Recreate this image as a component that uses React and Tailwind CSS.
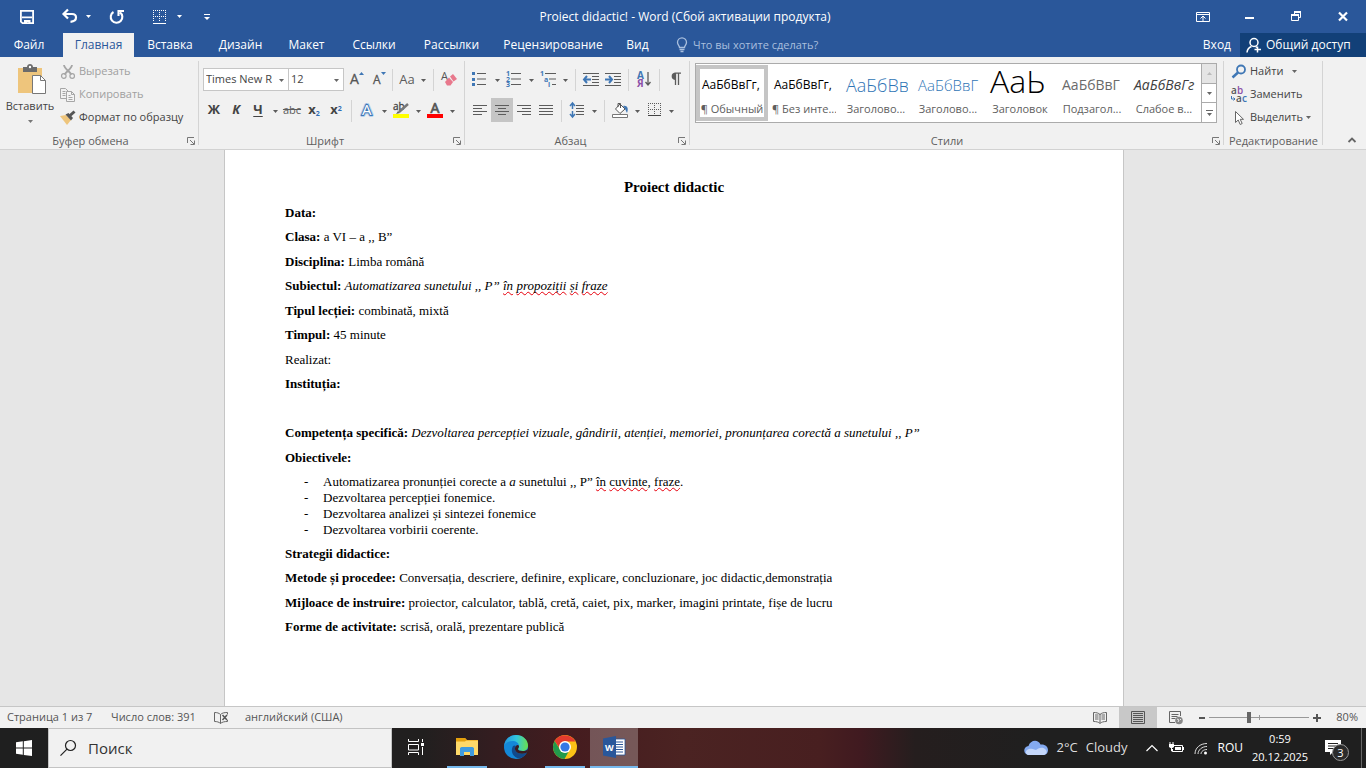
import clsx from "clsx";

const tabs = [
  { label: "Файл", cls: "w-[58px] mr-[5px]" },
  { label: "Главная", cls: "w-[71px] bg-[#f1f1f1] text-[#2a579a]" },
  { label: "Вставка", cls: "w-[72px]" },
  { label: "Дизайн", cls: "w-[69px]" },
  { label: "Макет", cls: "w-[63px]" },
  { label: "Ссылки", cls: "w-[72px]" },
  { label: "Рассылки", cls: "w-[83px]" },
  { label: "Рецензирование", cls: "w-[120px]" },
  { label: "Вид", cls: "w-[49px]" },
];

const styles = [
  { sample: "АаБбВвГг,", name: "¶ Обычный", cls: "text-[12px] text-black", active: true },
  { sample: "АаБбВвГг,", name: "¶ Без инте...", cls: "text-[12px] text-black" },
  { sample: "АаБбВв", name: "Заголово...", cls: "text-[18px] font-light text-[#2e74b5]" },
  { sample: "АаБбВвГ", name: "Заголово...", cls: "text-[15px] font-light text-[#2e74b5]" },
  { sample: "АаЬ", name: "Заголовок", cls: "text-[32px] font-light text-black pb-2" },
  { sample: "АаБбВвГ", name: "Подзагол...", cls: "text-[14px] text-[#6a6a6a]" },
  { sample: "АаБбВвГг", name: "Слабое в...", cls: "text-[14px] italic text-[#404040]" },
];

function Icon({ size = 16, className, children, label }) {
  return (
    <svg width={size} height={size} viewBox={`0 0 ${size} ${size}`} fill="none" className={clsx("shrink-0 overflow-visible", className)} role={label ? "img" : undefined} aria-label={label} aria-hidden={label ? undefined : true}>
      {children}
    </svg>
  );
}

function Caret({ className, label = "Ещё" }) {
  return (
    <button type="button" aria-label={label} className={clsx("grid h-[22px] w-3 shrink-0 place-items-center", className)}>
      <svg width="5" height="3" viewBox="0 0 5 3" aria-hidden="true"><path d="M0 0h5L2.5 3z" fill="currentColor" /></svg>
    </button>
  );
}

function Tool({ label, active, className, children }) {
  return (
    <button type="button" aria-label={label} title={label} className={clsx("grid h-6 shrink-0 place-items-center", className || "w-[22px]", active && "bg-[#c5c5c5]")}>
      {children}
    </button>
  );
}

function Sep() {
  return <span className="mx-1 h-[22px] w-px shrink-0 bg-[#d4d4d4]" />;
}

function Launcher() {
  return (
    <button type="button" aria-label="Параметры" className="absolute right-1 bottom-1">
      <Icon size={8}>
        <path d="M.5 6V.5H7M3 3l4 4M7.500 3.500v4h-4" stroke="#777" />
      </Icon>
    </button>
  );
}

function Group({ title, className, launcher, children }) {
  return (
    <section aria-label={title} className={clsx("relative flex shrink-0 flex-col", className)}>
      <div className="h-[76px]">{children}</div>
      <h2 className={clsx("text-center text-[11px] leading-4 whitespace-nowrap text-[#5e5e5e]", launcher && "pr-[18px]")}>{title}</h2>
      {launcher && <Launcher />}
      <span className="absolute top-1 right-0 h-[84px] w-px bg-[#d4d4d4]" />
    </section>
  );
}

/* horizontal strokes: each row is [x1, x2] */
function Lines({ rows, y = 3, step = 3, color = "#5c5c5c" }) {
  return <path d={rows.map(([a, b], i) => `M${a} ${y + i * step + 0.5}H${b}`).join("")} stroke={color} />;
}

function TitleBar() {
  return (
    <header className="relative flex h-[33px] shrink-0 items-center bg-[#2a579a] text-white">
      <div className="flex flex-1 items-center pl-[19px]">
        <button type="button" aria-label="Сохранить" className="mr-[26px]">
          <Icon>
            <path d="M1.900 1.900h12.200v12.200H3.500l-1.600-1.500z" stroke="#fff" strokeWidth="1.800" />
            <path d="M3 7.500h10v1.800H3zM5 11h6.500v4H9.500v-2H8v2H5z" fill="#fff" />
          </Icon>
        </button>
        <button type="button" aria-label="Отменить">
          <Icon size={18}>
            <path d="M7 1.500 2.500 6 7 10.500M3 6h8c3 0 4 1.800 4 3.500 0 2.600-2 4-5.500 4.300" stroke="#fff" strokeWidth="2.200" />
          </Icon>
        </button>
        <Caret className="mr-[14px] ml-[3px]" label="Список отмены" />
        <button type="button" aria-label="Повторить" className="mr-[27px]">
          <Icon size={18}>
            <path d="M5.500 4A5.800 5.800 0 1 0 12 4.300M10.500 8V3H16" stroke="#fff" strokeWidth="2.100" />
          </Icon>
        </button>
        <button type="button" aria-label="Границы">
          <Icon size={14}>
            <path d="M.5 0v12M6.500 0v12M12.500 0v12M0 .5h13M0 6.500h13" stroke="#fff" strokeDasharray="1 1" />
            <path d="M0 13.500h13" stroke="#fff" />
          </Icon>
        </button>
        <Caret className="ml-[6px]" label="Виды границ" />
        <button type="button" aria-label="Настройка панели" className="ml-[18px]">
          <Icon size={8}><path d="M1 1.500h6" stroke="#fff" /><path d="M1 4h6L4 7z" fill="#fff" /></Icon>
        </button>
      </div>
      <h1 className="text-[12px] whitespace-nowrap">Proiect didactic! - Word (Сбой активации продукта)</h1>
      <div className="flex flex-1 items-center justify-end gap-[31px] pr-[15px]">
        <button type="button" aria-label="Параметры ленты">
          <Icon size={14}><path d="M.5 2.500h13v9H.5zM.5 4.500h13M7 11V6.500M4.500 8.500 7 6l2.500 2.500" stroke="#fff" /></Icon>
        </button>
        <button type="button" aria-label="Свернуть">
          <Icon><path d="M4 9h9" stroke="#fff" strokeWidth="2" /></Icon>
        </button>
        <button type="button" aria-label="Восстановить">
          <Icon><path d="M3.500 6.500h7v5h-7zM6.500 6V3.500h6v5h-2" stroke="#fff" /><path d="M3 6h8M6 3h7" stroke="#fff" strokeWidth="2" /></Icon>
        </button>
        <button type="button" aria-label="Закрыть">
          <Icon><path d="m4 3.500 8 8M12 3.500l-8 8" stroke="#fff" strokeWidth="2.200" /></Icon>
        </button>
      </div>
    </header>
  );
}

function TabBar() {
  return (
    <nav className="flex h-6 shrink-0 items-stretch bg-[#2a579a] text-[12px] whitespace-nowrap text-white">
      {tabs.map((tab) => (
        <button key={tab.label} type="button" className={clsx("flex shrink-0 items-center justify-center", tab.cls)}>{tab.label}</button>
      ))}
      <label className="ml-3 flex flex-1 items-center gap-[3px] text-[#a9bfde]">
        <Icon>
          <path d="M5.500 10.500C5.500 8.500 3.500 8 3.500 5.300a4.500 4.500 0 0 1 9 0c0 2.700-2 3.200-2 5.200z" stroke="currentColor" strokeWidth="1.300" />
          <path d="M5.500 12.500h5M6.500 14.500h3" stroke="currentColor" strokeWidth="1.300" />
        </Icon>
        <input aria-label="Помощник" placeholder="Что вы хотите сделать?" className="w-40 bg-transparent text-[11px] outline-none placeholder:text-[#a9bfde]" />
      </label>
      <button type="button" className="px-[9px]">Вход</button>
      <button type="button" className="flex w-[126px] items-center gap-1 bg-[#124078] pl-[6px]">
        <Icon>
          <circle cx="8" cy="5.500" r="4" stroke="#fff" strokeWidth="1.500" />
          <path d="M1 15.500c.3-3.200 2-5.200 4.500-6M9.500 9.500l1.500 1M11.500 9.500v6M8.500 12.500h6.500" stroke="#fff" strokeWidth="1.500" />
        </Icon>
        Общий доступ
      </button>
    </nav>
  );
}

function ClipboardGroup() {
  return (
    <Group title="Буфер обмена" launcher className="w-[199px]">
      <div className="flex h-full text-[11px] text-[#444]">
        <button type="button" className="flex w-[60px] shrink-0 flex-col items-center pt-[7px]">
          <Icon size={32}>
            <path d="M4 4h24v25H4z" fill="#eec57c" />
            <path d="M9 3h4c0-4 6-4 6 0h4v5H9z" fill="#6b6b6b" />
            <circle cx="16" cy="3" r="1.200" fill="#fff" />
            <path d="M18.500 11.500h8l5 5v13h-13z" fill="#fff" stroke="#777" />
            <path d="M26.500 11.500v5h5" stroke="#777" />
          </Icon>
          <span className="mt-[2px] leading-4">Вставить</span>
          <svg width="5" height="3" viewBox="0 0 5 3" className="mt-[6px]" aria-hidden="true"><path d="M0 0h5L2.500 3z" fill="#777" /></svg>
        </button>
        <div className="flex flex-col pt-[3px] whitespace-nowrap">
          <button type="button" className="flex h-[23px] items-center gap-[3px] text-[#a0a0a0]">
            <Icon>
              <path d="M4 1c0 3 5 6 7.500 9.500M12 1c0 3-5 6-7.500 9.500" stroke="#a6a6a6" strokeWidth="1.800" />
              <circle cx="3.800" cy="12" r="2.300" stroke="#a6a6a6" strokeWidth="1.200" />
              <circle cx="12.200" cy="12" r="2.300" stroke="#a6a6a6" strokeWidth="1.200" />
            </Icon>
            Вырезать
          </button>
          <button type="button" className="flex h-[23px] items-center gap-[3px] text-[#a0a0a0]">
            <Icon>
              <path d="M6 11.500H.5v-10h5l3 3M2.500 4.500h3M2.500 6.500h3M2.500 8.500h3" stroke="#a6a6a6" />
              <path d="M6.500 4.500h5l3 3v7h-8z" fill="#f4f4f4" stroke="#a6a6a6" />
              <path d="M11.500 4.500v3h3M8.500 8.500h2M8.500 10.500h4M8.500 12.500h4" stroke="#a6a6a6" />
            </Icon>
            Копировать
          </button>
          <button type="button" className="flex h-[23px] items-center gap-[3px]">
            <Icon>
              <path d="m0 6 6-1 5 5-4 5z" fill="#eec57c" />
              <path d="m5.500 4.500 3-1.500 4.500 5-2 2.500z" fill="#555" />
              <path d="m10 5.500 4.500-4" stroke="#555" strokeWidth="3" />
            </Icon>
            Формат по образцу
          </button>
        </div>
      </div>
    </Group>
  );
}

function Combo({ label, value, className }) {
  return (
    <div className={clsx("relative h-[23px] border border-[#c6c6c6] bg-white", className)}>
      <select aria-label={label} defaultValue={value} className="block h-5 w-full appearance-none overflow-hidden bg-transparent pl-[2px] text-[11px] leading-5 text-[#444] outline-none">
        <option>{value}</option>
      </select>
      <svg width="5" height="3" viewBox="0 0 5 3" className="pointer-events-none absolute top-[10px] right-1" aria-hidden="true"><path d="M0 0h5L2.500 3z" fill="#666" /></svg>
    </div>
  );
}

function FontGroup() {
  return (
    <Group title="Шрифт" launcher className="w-[266px] pl-1">
      <div className="flex h-[34px] items-end text-[#5c5c5c]">
        <Combo label="Шрифт" value="Times New R" className="w-[86px]" />
        <Combo label="Размер" value="12" className="-ml-px w-14" />
        <Tool label="Увеличить размер"><Icon><text x="3" y="13" fontSize="14" fill="#555" stroke="#555" strokeWidth=".3">A</text><path d="M12 4h5l-2.500-3z" fill="#3f77b5" /></Icon></Tool>
        <Tool label="Уменьшить размер"><Icon><text x="4" y="13" fontSize="12" fill="#555" stroke="#555" strokeWidth=".3">A</text><path d="M12 1h5l-2.500 3z" fill="#3f77b5" /></Icon></Tool>
        <Sep />
        <Tool label="Регистр" className="w-5"><span className="text-[13px] leading-4">Aa</span></Tool>
        <Caret />
        <Sep />
        <Tool label="Очистить формат">
          <Icon><text x="0" y="9" fontSize="11" fill="#555">A</text><path d="m9 5.500 3-2.500 4 5-3.500 2.500z" fill="#e8788c" /><path d="m8 6.500 4 4.500-2.500 3.500H6L4 11z" fill="#e8788c" /></Icon>
        </Tool>
      </div>
      <div className="flex h-[31px] items-end text-[#5c5c5c]">
        <Tool label="Полужирный"><b className="text-[13px] text-[#444]">Ж</b></Tool>
        <Tool label="Курсив"><b className="text-[13px] text-[#444] italic">К</b></Tool>
        <Tool label="Подчёркнутый"><b className="text-[13px] text-[#444] underline underline-offset-2">Ч</b></Tool>
        <Caret />
        <Tool label="Зачёркнутый"><span className="text-[11px] line-through">abc</span></Tool>
        <Tool label="Подстрочный"><b className="text-[13px] text-[#444]">x<sub className="text-[7px] text-[#2f6db5]">2</sub></b></Tool>
        <Tool label="Надстрочный"><b className="text-[13px] text-[#444]">x<sup className="text-[7px] text-[#2f6db5]">2</sup></b></Tool>
        <Sep />
        <Tool label="Эффекты"><Icon><text x="3" y="13" fontSize="15" fill="#fff" stroke="#b7d0ec" strokeWidth="4" strokeLinejoin="round">A</text><text x="3" y="13" fontSize="15" fill="#fff" stroke="#3f77b5" strokeWidth="2" paintOrder="stroke">A</text></Icon></Tool>
        <Caret />
        <Tool label="Цвет выделения"><Icon><text x="0" y="8" fontSize="10" fill="#444" stroke="#444" strokeWidth=".3">ab</text><path d="M6 10 15 2" stroke="#777" strokeWidth="2.500" /><path d="m3 12 2-3 2 2z" fill="#666" /><path d="M0 12h16v4H0z" fill="#ff0" /></Icon></Tool>
        <Caret />
        <Tool label="Цвет текста"><Icon><text x="3.500" y="11" fontSize="14" fill="#555" stroke="#555" strokeWidth=".7">A</text><path d="M0 12h16v4H0z" fill="red" /></Icon></Tool>
        <Caret />
      </div>
    </Group>
  );
}

function ParagraphGroup() {
  return (
    <Group title="Абзац" launcher className="w-[225px] pl-1">
      <div className="flex h-[34px] items-end text-[#5c5c5c]">
        <Tool label="Маркеры"><Icon><path d="M0 1h3v3H0zM0 7h3v3H0zM0 12h3v3H0z" fill="#3f77b5" /><Lines rows={[[5, 14], [5, 14], [5, 14]]} y={2} step={5.500} /></Icon></Tool>
        <Caret />
        <Tool label="Нумерация"><Icon><g fontSize="7" fontWeight="700" fill="#3f77b5"><text x="0" y="5">1</text><text x="0" y="10.500">2</text><text x="0" y="16">3</text></g><Lines rows={[[5, 15], [5, 15], [5, 15]]} y={2} step={5.500} /></Icon></Tool>
        <Caret />
        <Tool label="Многоуровневый список"><Icon><g fontSize="7" fontWeight="700" fill="#3f77b5"><text x="0" y="5">1</text><text x="4" y="10.500">a</text><text x="8" y="16">i</text></g><path d="M5 2.500h11M9 8h7M12 13.500h4" stroke="#5c5c5c" /></Icon></Tool>
        <Caret />
        <Sep />
        <Tool label="Уменьшить отступ"><Icon><path d="M0 2.500h16M9 5.500h7M9 8.500h7M9 11.500h7M0 14.500h16" stroke="#5c5c5c" /><path d="M8 8.500H1M4 5 1 8.500 4 12" stroke="#3f77b5" strokeWidth="2" /></Icon></Tool>
        <Tool label="Увеличить отступ"><Icon><path d="M0 2.500h16M9 5.500h7M9 8.500h7M9 11.500h7M0 14.500h16" stroke="#5c5c5c" /><path d="M0 8.500h7M4 5l3 3.500L4 12" stroke="#3f77b5" strokeWidth="2" /></Icon></Tool>
        <Sep />
        <Tool label="Сортировка"><Icon><g fontSize="10" fontWeight="700"><text x="1" y="7.500" fill="#3f77b5">А</text><text x="1" y="15.500" fill="#8b4fa8">Я</text></g><path d="M12 1v13M9.500 11l2.500 3 2.500-3" stroke="#5c5c5c" strokeWidth="1.300" /></Icon></Tool>
        <Sep />
        <Tool label="Знаки абзаца"><Icon><path d="M8 9a4 3.800 0 0 1 0-7.500h6v1.300H8z" fill="#5c5c5c" /><path d="M8.500 2v12M11.500 2v12" stroke="#5c5c5c" strokeWidth="1.300" /></Icon></Tool>
      </div>
      <div className="flex h-[31px] items-end text-[#5c5c5c]">
        <Tool label="По левому краю"><Icon><Lines rows={[[1, 15], [1, 10], [1, 15], [1, 10]]} /></Icon></Tool>
        <Tool label="По центру" active><Icon><Lines rows={[[1, 15], [4, 12], [1, 15], [4, 12]]} /></Icon></Tool>
        <Tool label="По правому краю"><Icon><Lines rows={[[1, 15], [6, 15], [1, 15], [6, 15]]} /></Icon></Tool>
        <Tool label="По ширине"><Icon><Lines rows={[[1, 15], [1, 15], [1, 15], [1, 15]]} /></Icon></Tool>
        <Sep />
        <Tool label="Интервал"><Icon><path d="M3.500 2v5M3.500 9v5M1 4l2.500-3L6 4M1 12l2.500 3L6 12" stroke="#3f77b5" strokeWidth="1.500" /><Lines rows={[[7, 15], [7, 15], [7, 15], [7, 15]]} /></Icon></Tool>
        <Caret />
        <Sep />
        <Tool label="Заливка"><Icon><path d="m8 2 5 5-5 4.500L3.500 7z" fill="#fff" stroke="#555" /><path d="M6 5V1.500h2.500V6" stroke="#555" /><path d="M11 4c4-1 6 2 4 7-1-2-1.500-4-4-7z" fill="#3f77b5" /><path d="M.5 12.500h15v3H.5z" fill="#fff" stroke="#777" /></Icon></Tool>
        <Caret />
        <Tool label="Границы"><Icon><path d="M2.500 1v12M8.500 1v12M14.500 1v12M2 1.500h13M2 7.500h13" stroke="#5c5c5c" strokeDasharray="1 1" /><path d="M2 13.500h13" stroke="#444" /></Icon></Tool>
        <Caret />
      </div>
    </Group>
  );
}

function StylesGroup() {
  return (
    <Group title="Стили" launcher className="min-w-0 flex-1 pr-[7px] pl-[5px]">
      <div className="h-full pt-[6px]">
        <div className="flex h-[60px] border border-[#ababab] bg-white">
          <div className="flex min-w-0 flex-1 overflow-hidden">
            {styles.map((s, i) => (
              <button key={i} type="button" className={clsx("my-px flex w-[72px] shrink-0 flex-col overflow-hidden border-4 whitespace-nowrap", s.active ? "border-[#c5c5c5]" : "border-transparent")}>
                <span className={clsx("flex h-8 w-full items-center overflow-hidden pl-[2px] leading-8", s.cls)}>{s.sample}</span>
                <span className="w-full text-center text-[11px] leading-4 text-[#5e5e5e]">{s.name}</span>
              </button>
            ))}
          </div>
          <div className="flex w-[15px] flex-col divide-y divide-[#ababab] border-l border-[#ababab] text-[#666]">
            <button type="button" aria-label="Вверх" className="grid flex-1 place-items-center bg-[#e5e5e5] text-[#bbb]"><svg width="5" height="3" viewBox="0 0 5 3"><path d="M0 3h5L2.500 0z" fill="currentColor" /></svg></button>
            <button type="button" aria-label="Вниз" className="grid flex-1 place-items-center"><svg width="5" height="3" viewBox="0 0 5 3"><path d="M0 0h5L2.500 3z" fill="currentColor" /></svg></button>
            <button type="button" aria-label="Все стили" className="grid flex-1 place-items-center"><svg width="7" height="6" viewBox="0 0 7 6"><path d="M0 0h7v1H0zM1 3h5L3.500 6z" fill="currentColor" /></svg></button>
          </div>
        </div>
      </div>
    </Group>
  );
}

function EditingGroup() {
  return (
    <Group title="Редактирование" className="w-[99px]">
      <div className="flex flex-col pt-[3px] pl-[7px] text-[11px] text-[#444]">
        <button type="button" className="flex h-[23px] items-center gap-[3px]">
          <Icon><circle cx="10" cy="5.500" r="4" stroke="#3f77b5" strokeWidth="1.800" /><path d="m7 8.500-5.500 5" stroke="#3f77b5" strokeWidth="2.500" /></Icon>
          Найти
          <svg width="5" height="3" viewBox="0 0 5 3" className="ml-[6px]"><path d="M0 0h5L2.500 3z" fill="#666" /></svg>
        </button>
        <button type="button" className="flex h-[23px] items-center gap-[3px]">
          <Icon>
            <g fontSize="10" fontWeight="600"><text x="0" y="7" fill="#555">a</text><text x="6" y="7" fill="#8b4fa8">b</text><text x="5" y="15" fill="#555">a</text><text x="11" y="15" fill="#3f77b5">c</text></g>
            <path d="M.5 9v3H4M2.500 10.500 4 12l-1.500 1.500" stroke="#3f77b5" />
          </Icon>
          Заменить
        </button>
        <button type="button" className="flex h-[23px] items-center gap-[3px]">
          <Icon><path d="M4.500 1.500v11l2.700-2.500 2 4.500 2-1-2-4.200h3.300z" fill="#fff" stroke="#666" /></Icon>
          Выделить
          <svg width="5" height="3" viewBox="0 0 5 3"><path d="M0 0h5L2.500 3z" fill="#666" /></svg>
        </button>
      </div>
    </Group>
  );
}

function Ribbon() {
  return (
    <div className="flex h-[93px] shrink-0 border-b border-[#d2d2d2] bg-[#f1f1f1]">
      <ClipboardGroup />
      <FontGroup />
      <ParagraphGroup />
      <StylesGroup />
      <EditingGroup />
      <button type="button" aria-label="Свернуть ленту" className="flex w-[43px] items-end justify-center pb-1 pl-[14px]">
        <Icon size={10}><path d="m1.500 7 3.500-3.500L8.500 7" stroke="#666" strokeWidth="1.800" /></Icon>
      </button>
    </div>
  );
}

function Typo({ children }) {
  return <span className="underline decoration-red-600 decoration-wavy decoration-1 underline-offset-1 [text-decoration-skip-ink:none]">{children}</span>;
}

function Line({ label, children }) {
  return <p className="pb-2 even:pb-[9px]"><b>{label}</b> {children}</p>;
}

function Document() {
  return (
    <main className="flex min-h-0 flex-1 justify-center overflow-hidden bg-[#e6e6e6] pr-[18px]">
      <article className="w-[900px] border-x border-[#c6c6c6] bg-white px-[60px] pt-[29px] font-['Liberation_Serif',serif] text-[13px] leading-4 text-black">
        <h2 className="pb-[10px] text-center text-[15px] font-bold">Proiect didactic</h2>
        <div>
          <Line label="Data:" />
          <Line label="Clasa:">a VI – a ,, B”</Line>
          <Line label="Disciplina:">Limba română</Line>
          <Line label="Subiectul:"><i>Automatizarea sunetului ,, P” <Typo>în</Typo> <Typo>propoziții</Typo> <Typo>și</Typo> <Typo>fraze</Typo></i></Line>
          <Line label="Tipul lecției:">combinată, mixtă</Line>
          <Line label="Timpul:">45 minute</Line>
          <p className="pb-2">Realizat:</p>
          <Line label="Instituția:" />
          <p className="pb-2">&nbsp;</p>
          <Line label="Competența specifică:"><i>Dezvoltarea percepției vizuale, gândirii, atenției, memoriei, pronunțarea corectă a sunetului ,, P”</i></Line>
          <Line label="Obiectivele:" />
        </div>
        <ul className="pb-2">
          {[
            <>Automatizarea pronunției corecte a <i>a</i> sunetului ,, P” <Typo>în</Typo> <Typo>cuvinte</Typo>, <Typo>fraze</Typo>.</>,
            "Dezvoltarea percepției fonemice.",
            "Dezvoltarea analizei și sintezei fonemice",
            "Dezvoltarea vorbirii coerente.",
          ].map((item, i) => (
            <li key={i} className="flex pl-[19px]"><span className="w-[19px]">-</span><span>{item}</span></li>
          ))}
        </ul>
        <div>
          <Line label="Strategii didactice:" />
          <Line label="Metode și procedee:">Conversația, descriere, definire, explicare, concluzionare, joc didactic,demonstrația</Line>
          <Line label="Mijloace de instruire:">proiector, calculator, tablă, cretă, caiet, pix, marker, imagini printate, fișe de lucru</Line>
          <Line label="Forme de activitate:">scrisă, orală, prezentare publică</Line>
        </div>
      </article>
    </main>
  );
}

function StatusBar() {
  return (
    <footer className="flex h-[22px] shrink-0 items-center border-t border-[#c6c6c6] bg-[#f1f1f1] pl-[7px] text-[11px] whitespace-nowrap text-[#555]">
      <span className="w-[104px]">Страница 1 из 7</span>
      <span className="w-[102px]">Число слов: 391</span>
      <Icon className="mr-4" label="Правописание">
        <path d="M7.500 13.500C6 12 4 11.500 1.500 11.500v-9C4 2.500 6 3 7.500 4.500zM7.500 4.500C9 3 11 2.500 14.500 2.500v2M14.500 10v1.500c-3 0-5.500.5-7 2" stroke="#666" />
        <path d="m9.500 5 4.500 5M14 5l-4.500 5" stroke="#555" strokeWidth="1.500" />
      </Icon>
      <span className="flex-1">английский (США)</span>
      <button type="button" aria-label="Режим чтения" className="grid h-full w-[38px] place-items-center">
        <Icon><path d="M8 13.500C6.500 12 4.500 11.500 1.500 11.500v-9C4.500 2.500 6.500 3 8 4.500 9.500 3 11.500 2.500 14.500 2.500v9c-3 0-5 .5-6.500 2zM8 4v9M3 5h3.500M3 7h3.500M3 9h3.500M9.500 5H13M9.500 7H13M9.500 9H13" stroke="#666" /></Icon>
      </button>
      <button type="button" aria-label="Разметка страницы" className="grid h-full w-[38px] place-items-center bg-[#c8c8c8]">
        <Icon><path d="M1.500 1.500h13v12h-13zM3 3.500h10M3 5.500h10M3 7.500h10M3 9.500h10M3 11.500h10" stroke="#555" /></Icon>
      </button>
      <button type="button" aria-label="Веб-документ" className="grid h-full w-[38px] place-items-center">
        <Icon><path d="M7 12.500H1.500v-11h11V6M3.500 4.500h7M3.500 6.500h6M3.500 8.500h4" stroke="#666" /><circle cx="11" cy="10.500" r="3.800" fill="#888" /><path d="M9 9l2 1-1 2M13 9l-1 1" stroke="#eee" /></Icon>
      </button>
      <button type="button" aria-label="Уменьшить" className="grid w-[14px] place-items-center"><Icon size={6}><path d="M0 3h6" stroke="#555" strokeWidth="2" /></Icon></button>
      <input
        type="range"
        aria-label="Масштаб"
        min="0"
        max="200"
        defaultValue="80"
        className="h-3 w-[100px] appearance-none bg-[linear-gradient(#999,#999),linear-gradient(#999,#999)] bg-[length:100%_1px,1px_5px] bg-center bg-no-repeat [&::-webkit-slider-thumb]:h-[11px] [&::-webkit-slider-thumb]:w-1 [&::-webkit-slider-thumb]:appearance-none [&::-webkit-slider-thumb]:bg-[#666]"
      />
      <button type="button" aria-label="Увеличить" className="grid w-4 place-items-center"><Icon size={8}><path d="M0 4h8M4 0v8" stroke="#555" strokeWidth="2" /></Icon></button>
      <span className="w-[41px] pr-2 text-right">80%</span>
    </footer>
  );
}

function TaskButton({ label, running, active, children }) {
  return (
    <button type="button" aria-label={label} className={clsx("flex h-full w-12 shrink-0 flex-col items-center", active && "bg-white/25")}>
      <span className="grid h-[38px] place-items-center">{children}</span>
      {running && <span className={clsx("h-[2px] bg-[#76b9ed]", active ? "w-full" : "w-10")} />}
    </button>
  );
}

function Taskbar() {
  return (
    <nav aria-label="Панель задач" className="flex h-10 shrink-0 items-center bg-[linear-gradient(90deg,#1f1f1f_0%,#211f1f_31%,#331d20_36%,#451c1f_42%,#4b2322_50%,#481f20_60%,#401a20_63%,#251e1e_67%,#1f1f1f_76%,#1f1f1f_100%)] text-[12px] whitespace-nowrap text-white">
      <button type="button" aria-label="Пуск" className="grid h-full w-12 place-items-center">
        <Icon><path d="M0 2.300 6.800 1.300v6.300H0zM7.800 1.200 16 0v7.600H7.800zM0 8.500h6.800v6.300L0 13.800zM7.800 8.500H16V16l-8.200-1.100z" fill="#fff" /></Icon>
      </button>
      <label className="flex h-full w-[344px] items-center gap-3 border border-[#c3c3c3] bg-[#f1f1f1] pl-[11px]">
        <Icon><circle cx="10.500" cy="5.500" r="5" stroke="#222" strokeWidth="1.200" /><path d="M7 9.200.5 15.700" stroke="#222" strokeWidth="1.200" /></Icon>
        <input aria-label="Поиск" placeholder="Поиск" className="min-w-0 flex-1 bg-transparent text-[15px] outline-none placeholder:text-[#333]" />
      </label>
      <TaskButton label="Представление задач">
        <Icon><path d="M.5 0v2.500h10V0M.5 5.500h10v5.500H.5zM.5 16v-2.500h10V16M14.500 0v3M14.500 8v8" stroke="#fff" /><path d="M13 4h3v3h-3z" fill="#fff" /></Icon>
      </TaskButton>
      <span className="w-[3px]" />
      <TaskButton label="Проводник" running>
        <Icon size={22}><path d="M0 2h9l2 2h11v15H0z" fill="#f5ba33" /><path d="M0 5h22v14H0z" fill="#ffd969" /><path d="M0 2h9l1.500 2L9 5.500H0z" fill="#e5a00d" /><path d="M4 20v-8l1.500-1h11l1.500 1v8h-4v-4H8v4z" fill="#3f9be0" /></Icon>
      </TaskButton>
      <span className="w-px" />
      <TaskButton label="Edge">
        <Icon size={24}>
          <defs>
            <linearGradient id="edgeTop" x1="0" y1="8" x2="24" y2="10" gradientUnits="userSpaceOnUse"><stop stopColor="#2596dc" /><stop offset=".5" stopColor="#31c5de" /><stop offset="1" stopColor="#6be04b" /></linearGradient>
          </defs>
          <circle cx="12" cy="12" r="12" fill="#1488d8" />
          <path d="M0 11C1 4 6 0 12 0c7 0 12 5 12 10.500 0 3.500-2.500 5.500-5.500 5.500-3 0-4.500-1-4.500-2s1-1 1-3c0-3-3-5-6.500-5C4 6 1 8.500 0 11z" fill="url(#edgeTop)" />
          <path d="M9 11c-3 5 0 12 6.500 12.300C19 22.500 22 20 23 17.500c-4 2-9 1.500-11-1-1.300-1.600-1.500-4 0-5.500-.8-.8-2.200-.8-3 0z" fill="#114a8b" />
          <path d="M14 14c0-1 1-1 1-3-.5-1-2-1.500-3 0-1.500 1.500-1.300 4 0 5.500 2 2.500 7 3 11 1l1.500-4c-1.500 2-3.500 2.500-6 2.500-3 0-4.500-1-4.500-2z" fill="#3a1c20" />
        </Icon>
      </TaskButton>
      <span className="w-px" />
      <TaskButton label="Chrome" running>
        <Icon size={24}>
          <circle cx="12" cy="12" r="12" fill="#fbc116" />
          <path d="M1.600 6A12 12 0 0 1 22.400 6.500H12A5.500 5.500 0 0 0 6.800 13.500z" fill="#e33b2e" />
          <path d="M1.600 6A12 12 0 0 0 11.500 24l5-9A5.500 5.500 0 0 1 7.200 14.700z" fill="#229a4c" />
          <circle cx="12" cy="12" r="6" fill="#fff" />
          <circle cx="12" cy="12" r="4.600" fill="#3478e5" />
        </Icon>
      </TaskButton>
      <span className="w-px" />
      <TaskButton label="Word" running active>
        <Icon size={22}>
          <path d="M12 3h10v16H12z" fill="#fff" stroke="#2a579a" strokeWidth=".8" />
          <path d="M13 6h7M13 8.500h7M13 11h7M13 13.500h7M13 16h7" stroke="#2a579a" strokeWidth="1.200" />
          <path d="M0 2.500 13 0v22L0 19.500z" fill="#2a579a" />
          <text x="2" y="14.500" fontSize="9" fontWeight="700" fill="#fff">W</text>
        </Icon>
      </TaskButton>
      <div className="flex-1" />
      <button type="button" className="flex items-center gap-[9px] text-[13px] text-[#ddd]">
        <Icon size={24}>
          <path d="M5 19a4.500 4.500 0 0 1-.5-9C6 4 14 2.500 16.500 8.500 21 8 24 10.500 24 14c0 3-2 5-5 5z" fill="#84aaf0" />
          <path d="M4 19c-3-1-3-5 1-6 4-1 6 1 7 1 2-2 7-4 10 0 2 3-1 5-3 5z" fill="#c4d7fa" />
        </Icon>
        <span className="flex gap-2"><span>2°C</span><span>Cloudy</span></span>
      </button>
      <button type="button" aria-label="Скрытые значки" className="ml-[17px]"><Icon size={14}><path d="m1.500 10 5.500-5.500L12.500 10" stroke="#fff" strokeWidth="1.200" /></Icon></button>
      <Icon className="ml-[9px]" label="Батарея"><path d="M5.500 5.500h9v6h-10V9" stroke="#fff" /><path d="M7 7h6v3H7zM15 7h1v3h-1zM1 4h5v3L4.500 8h-2L1 7z" fill="#fff" /><path d="M2 2v2M5 2v2M3.500 8v3H5" stroke="#fff" /></Icon>
      <Icon className="mx-[9px]" label="Wi-Fi"><path d="M2 14C2 8 7 3.500 14 3.500M5 14c0-4 4-7.500 9-7.500M8 14c0-2.500 2.500-4.500 6-4.500" stroke="#ddd" /><circle cx="12.500" cy="13" r="1.500" fill="#fff" /></Icon>
      <span>ROU</span>
      <time className="ml-[9px] w-14 text-center text-[11px] leading-[18px]">0:59<br />20.12.2025</time>
      <button type="button" aria-label="Уведомления" className="relative ml-4 h-6 w-[26px]">
        <Icon size={18}><path d="M1 1h16v12H9l-3 3v-3H1z" fill="#fff" /><path d="M4 4.500h10M4 7h10M4 9.500h6" stroke="#222" /></Icon>
        <span className="absolute top-2 left-2 grid h-[17px] w-[17px] place-items-center rounded-full border border-[#999] bg-[#2b2b2b] text-[11px]">3</span>
      </button>
      <span className="ml-[11px] h-full w-[5px] border-l border-[#666]" />
    </nav>
  );
}

export default function App() {
  return (
    <div className="flex h-screen flex-col overflow-hidden font-['Open_Sans','Noto_Sans',sans-serif]">
      <TitleBar />
      <TabBar />
      <Ribbon />
      <Document />
      <StatusBar />
      <Taskbar />
    </div>
  );
}
